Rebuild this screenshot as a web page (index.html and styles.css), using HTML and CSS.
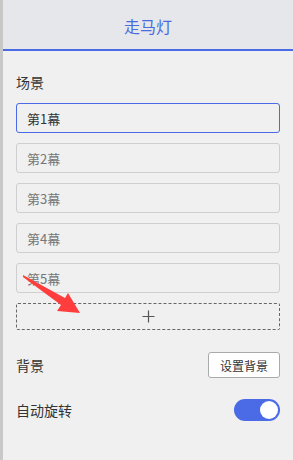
FILE: index.html
```html
<!DOCTYPE html>
<html lang="zh">
<head>
<meta charset="utf-8">
<link rel="stylesheet" href="styles.css">
</head>
<body>
<div class="panel">
  <div class="header">走马灯</div>
  <div class="content">
    <div class="label">场景</div>
    <div class="scenes">
      <div class="scene active">第1幕</div>
      <div class="scene">第2幕</div>
      <div class="scene">第3幕</div>
      <div class="scene">第4幕</div>
      <div class="scene">第5幕</div>
      <div class="add">
        <svg width="13" height="13" viewBox="0 0 13 13"><path d="M6.5 0.5v12M0.5 6.5h12" stroke="#555" stroke-width="1.2" fill="none"/></svg>
      </div>
    </div>
    <div class="row bg-row">
      <span class="label">背景</span>
      <button class="btn">设置背景</button>
    </div>
    <div class="row toggle-row">
      <span class="label">自动旋转</span>
      <span class="toggle"><span class="knob"></span></span>
    </div>
  </div>
  <svg class="arrow" width="293" height="460" viewBox="0 0 293 460">
    <path d="M23 275 L65 298 L68 293 L80 313 L57 311 L61 305 L23 277 Z" fill="#ff3d3d"/>
  </svg>
</div>
</body>
</html>
```
FILE: styles.css
```css
* { box-sizing: border-box; }
html, body { margin: 0; padding: 0; }
body {
  width: 293px;
  height: 460px;
  font-family: "Noto Sans CJK SC", "Noto Sans", sans-serif;
  background: #f0f0f0;
  overflow: hidden;
}
.panel {
  position: relative;
  height: 460px;
  background: #f0f0f0;
  border-left: 3px solid #c8c8c8;
}
.header {
  height: 51px;
  background: #e6e7ea;
  border-bottom: 2px solid #4a6ae6;
  display: flex;
  align-items: center;
  justify-content: center;
  font-size: 16px;
  color: #4a6ae0;
  padding-top: 2px;
}
.content {
  padding: 0 13px;
}
.label {
  font-size: 14px;
  color: #333;
  line-height: 20px;
}
.content > .label {
  margin-top: 21px;
}
.scenes {
  margin-top: 11px;
  display: flex;
  flex-direction: column;
  gap: 10px;
}
.scene {
  height: 30px;
  border: 1px solid #cfcfcf;
  border-radius: 3px;
  padding-left: 10px;
  display: flex;
  align-items: center;
  font-size: 13px;
  color: #777;
}
.scene.active {
  border-color: #4a6ae6;
  color: #333;
}
.add {
  height: 27px;
  border: 1px dashed #666;
  border-radius: 2px;
  display: flex;
  align-items: center;
  justify-content: center;
}
.add svg { display: block; }
.row {
  display: flex;
  align-items: center;
  justify-content: space-between;
}
.bg-row { margin-top: 22px; }
.toggle-row { margin-top: 21px; }
.btn {
  width: 72px;
  height: 26px;
  background: #fff;
  border: 1px solid #aaa;
  border-radius: 3px;
  font-family: inherit;
  font-size: 12px;
  color: #333;
  padding: 0;
}
.toggle {
  width: 46px;
  height: 22px;
  border-radius: 11px;
  background: #4a6ae6;
  display: flex;
  align-items: center;
  justify-content: flex-end;
  padding-right: 2px;
}
.knob {
  width: 18px;
  height: 18px;
  border-radius: 50%;
  background: #fff;
}
.arrow {
  position: absolute;
  left: -3px;
  top: 0;
  pointer-events: none;
}
```
